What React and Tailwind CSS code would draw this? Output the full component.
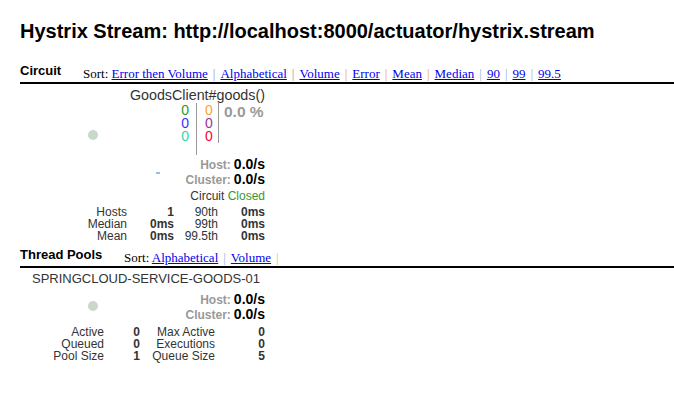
const sans = { fontFamily: '"Liberation Sans", Arial, sans-serif' };
const serif = { fontFamily: '"Liberation Serif", "Times New Roman", serif' };

const Sep = ({ c }) => <span className={`mx-[5px] ${c}`}>|</span>;

const SortLink = ({ children }) => (
  <a href="#" className="text-[#0000ee] underline">
    {children}
  </a>
);

const Rate = ({ label }) => (
  <div className="flex justify-end items-baseline h-[15px] leading-[15px]">
    <span className="text-[12px] font-bold text-[#999]">{label}:</span>
    <span className="ml-[3px] text-[14px] font-bold text-black">0.0/s</span>
  </div>
);

const Header = ({ label, width, children }) => (
  <div className="ml-[20px] flex items-end border-b-2 border-black pb-[1px]">
    <span className={`text-[13px] font-bold text-black leading-[15px] mb-[3px] ${width}`}>{label}</span>
    <span className="text-[13px] leading-[15px] text-black whitespace-nowrap" style={serif}>
      Sort: {children}
    </span>
  </div>
);

export default function App() {
  return (
    <div className="w-[674px] h-[415px] bg-white text-[#333] overflow-hidden" style={sans}>
      <h1 className="pl-[20px] pt-[19px] text-[20px] font-bold text-black leading-[24px]">
        Hystrix Stream: http://localhost:8000/actuator/hystrix.stream
      </h1>

      <div className="mt-[20px]">
        <Header label="Circuit" width="w-[63px]">
          <SortLink>Error then Volume</SortLink>
          <Sep c="text-[#999]" />
          <SortLink>Alphabetical</SortLink>
          <Sep c="text-[#999]" />
          <SortLink>Volume</SortLink>
          <Sep c="text-[#f0a040]" />
          <SortLink>Error</SortLink>
          <Sep c="text-[#f0a040]" />
          <SortLink>Mean</SortLink>
          <Sep c="text-[#f0a040]" />
          <SortLink>Median</SortLink>
          <Sep c="text-[#8ab4e0]" />
          <SortLink>90</SortLink>
          <Sep c="text-[#8ab4e0]" />
          <SortLink>99</SortLink>
          <Sep c="text-[#8ab4e0]" />
          <SortLink>99.5</SortLink>
        </Header>
      </div>

      {/* circuit box */}
      <div className="ml-[20px] w-[245px] flex flex-col">
        <div className="text-right text-[14.3px] leading-[16px] pt-[3px] whitespace-nowrap">
          GoodsClient#goods()
        </div>
        <div className="flex h-[52px]">
          <div className="w-[157px] pl-[68px] pt-[27px]">
            <div className="w-[10px] h-[10px] rounded-full bg-[#c9d9c9]" />
          </div>
          <div className="flex flex-col items-end w-[20px] pr-[7px] pt-[1px] border-r border-[#999] h-[52px] text-[14px] leading-[13px]">
            <span className="text-[#2e9a2e]">0</span>
            <span className="text-[#3333ff]">0</span>
            <span className="text-[#33d6b0]">0</span>
          </div>
          <div className="flex flex-col items-start w-[22px] pl-[8px] pt-[1px] border-r border-[#999] h-[40px] text-[14px] leading-[13px]">
            <span className="text-[#ffa033]">0</span>
            <span className="text-[#993399]">0</span>
            <span className="text-[#ff0033]">0</span>
          </div>
          <div className="pl-[5px] text-[15.5px] font-bold text-[#999] leading-[17px]">0.0 %</div>
        </div>
        <div className="flex items-start">
          <div className="w-[150px] pl-[136px] pt-[17px]">
            <div className="w-[4px] h-[2px] bg-[#9bbbe0]" />
          </div>
          <div className="flex-1 pt-[2px]">
            <Rate label="Host" />
            <Rate label="Cluster" />
          </div>
        </div>
        <div className="text-right text-[12px] leading-[14px] mt-[1.5px]">
          Circuit <span className="text-[#339933]">Closed</span>
        </div>
        <div className="grid grid-cols-[107px_47px_44px_47px] text-[12px] leading-[12px] mt-[3px] text-right">
          <span>Hosts</span>
          <span className="font-bold">1</span>
          <span>90th</span>
          <span className="font-bold">0ms</span>
          <span>Median</span>
          <span className="font-bold">0ms</span>
          <span>99th</span>
          <span className="font-bold">0ms</span>
          <span>Mean</span>
          <span className="font-bold">0ms</span>
          <span>99.5th</span>
          <span className="font-bold">0ms</span>
        </div>
      </div>

      <div className="mt-[5px]">
        <Header label="Thread Pools" width="w-[104px]">
          <SortLink>Alphabetical</SortLink>
          <Sep c="text-[#8ab4e0]" />
          <SortLink>Volume</SortLink>
          <Sep c="text-[#f0b080]" />
        </Header>
      </div>

      <div className="ml-[20px] w-[245px] flex flex-col">
        <div className="text-[13px] leading-[14px] pt-[4px] pl-[12px] whitespace-nowrap">SPRINGCLOUD-SERVICE-GOODS-01</div>
        <div className="flex">
          <div className="w-[140px] pl-[68px] pt-[15px]">
            <div className="w-[10px] h-[10px] rounded-full bg-[#c9d9c9]" />
          </div>
          <div className="flex-1 pt-[6px]">
            <Rate label="Host" />
            <Rate label="Cluster" />
          </div>
        </div>
        <div className="grid grid-cols-[84px_36px_75px_50px] text-[12px] leading-[12px] mt-[4px] text-right">
          <span>Active</span>
          <span className="font-bold">0</span>
          <span>Max Active</span>
          <span className="font-bold">0</span>
          <span>Queued</span>
          <span className="font-bold">0</span>
          <span>Executions</span>
          <span className="font-bold">0</span>
          <span>Pool Size</span>
          <span className="font-bold">1</span>
          <span>Queue Size</span>
          <span className="font-bold">5</span>
        </div>
      </div>
    </div>
  );
}
